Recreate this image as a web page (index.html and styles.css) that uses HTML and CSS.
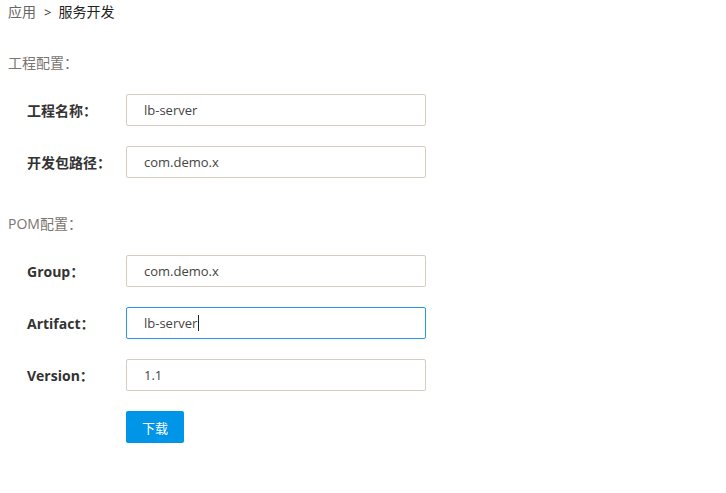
FILE: index.html
```html
<!DOCTYPE html>
<html lang="zh-CN">
<head>
<meta charset="utf-8">
<title>服务开发</title>
<link rel="stylesheet" href="styles.css">
</head>
<body>
<div class="page">
  <div class="breadcrumb"><span class="crumb-muted">应用</span><span class="sep">&gt;</span><span class="crumb-current">服务开发</span></div>

  <div class="section-title first">工程配置：</div>
  <div class="form">
    <div class="row"><label class="label">工程名称：</label><div class="input">lb-server</div></div>
    <div class="row"><label class="label">开发包路径：</label><div class="input">com.demo.x</div></div>
  </div>

  <div class="section-title second">POM配置：</div>
  <div class="form">
    <div class="row"><label class="label">Group：</label><div class="input">com.demo.x</div></div>
    <div class="row"><label class="label">Artifact：</label><div class="input active">lb-server<span class="caret"></span></div></div>
    <div class="row"><label class="label">Version：</label><div class="input">1.1</div></div>
    <div class="row"><span class="label"></span><button class="btn">下载</button></div>
  </div>
</div>
</body>
</html>
```
FILE: styles.css
```css
html, body {
  margin: 0;
  padding: 0;
  background: #fff;
}
body {
  font-family: "Open Sans", "Noto Sans CJK SC", sans-serif;
  font-size: 14px;
  color: #333;
}
.page {
  padding: 2px 8px 0 8px;
}
.breadcrumb {
  line-height: 20px;
  height: 20px;
  display: flex;
  align-items: center;
}
.crumb-muted { color: #666; }
.sep { color: #333; margin: 0 7px 0 8px; font-size: 13px; }
.crumb-current { color: #222; }

.section-title {
  line-height: 20px;
  color: #7a756f;
}
.section-title.first { margin-top: 31px; }
.section-title.second { margin-top: 36px; }

.form {
  display: flex;
  flex-direction: column;
  gap: 20px;
  margin-top: 21px;
  padding-left: 19px;
}
.row {
  display: flex;
  align-items: center;
  height: 32px;
}
.label {
  width: 99px;
  font-weight: bold;
  color: #333;
  flex: none;
}
.input {
  box-sizing: border-box;
  width: 300px;
  height: 32px;
  border: 1px solid #d6cdc2;
  border-radius: 2px;
  padding: 0 17px;
  line-height: 30px;
  font-size: 13px;
  color: #444;
  display: flex;
  align-items: center;
}
.input.active {
  border-color: #2d95e3;
}
.caret {
  display: inline-block;
  width: 1px;
  height: 16px;
  background: #222;
  margin-left: 1px;
}
.btn {
  width: 58px;
  height: 32px;
  border: none;
  border-radius: 2px;
  background: #0095e6;
  color: #fff;
  font-family: "Noto Sans CJK SC", sans-serif;
  font-size: 13px;
  padding: 0;
  cursor: pointer;
}
```
